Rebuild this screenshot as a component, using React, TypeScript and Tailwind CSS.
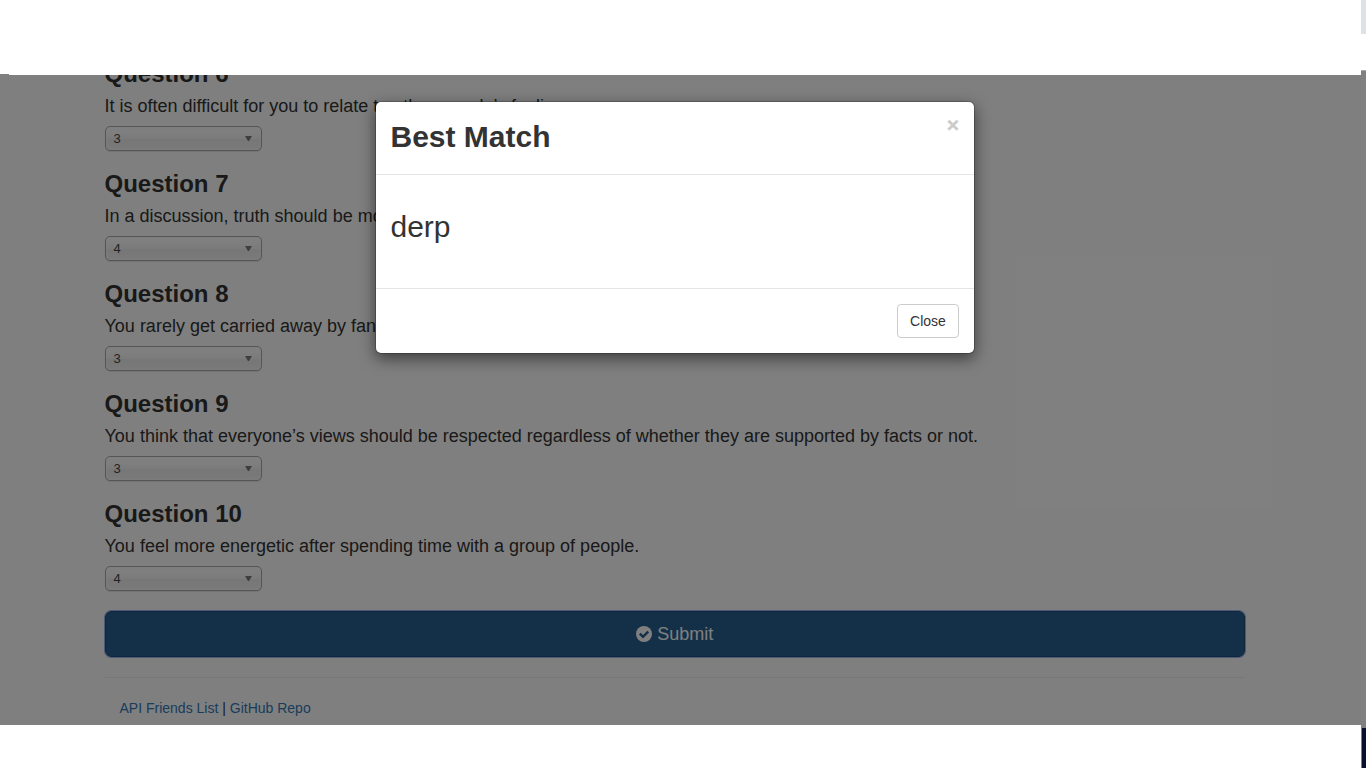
import React from "react";

type Question = { id: number; text: string; answer: number };

const questions: Question[] = [
  { id: 6, text: "It is often difficult for you to relate to other people’s feelings.", answer: 3 },
  { id: 7, text: "In a discussion, truth should be more important than people’s sensitivities.", answer: 4 },
  { id: 8, text: "You rarely get carried away by fantasies and ideas.", answer: 3 },
  { id: 9, text: "You think that everyone’s views should be respected regardless of whether they are supported by facts or not.", answer: 3 },
  { id: 10, text: "You feel more energetic after spending time with a group of people.", answer: 4 },
];

function ChosenSelect({ value }: { value: number }) {
  return (
    <div className="mt-2.5 flex h-[25px] w-[157px] items-center justify-between rounded-[5px] border border-[#aaa] bg-[linear-gradient(#fff_20%,#f6f6f6_50%,#eee_52%,#f4f4f4_100%)] pr-[9px] pl-2 text-[13px] leading-6 text-[#444] shadow-[0_0_3px_white_inset,0_1px_1px_rgba(0,0,0,0.1)]">
      <span>{value}</span>
      <svg width="7" height="5" viewBox="0 0 7 5" className="fill-[#7c7c7c]">
        <path d="M0 0h7L4 5H3z" />
      </svg>
    </div>
  );
}

function CheckBadge() {
  return (
    <svg width="16" height="16" viewBox="0 0 16 16">
      <circle cx="8" cy="8" r="8" fill="currentColor" />
      <path d="M3.8 7.6 7 10.8 12.2 5.6" fill="none" className="stroke-[#286090]" strokeWidth="2.5" />
    </svg>
  );
}

function QuestionBlock({ question }: { question: Question }) {
  return (
    <section className="h-[110px]">
      <h3 className="text-2xl leading-[26px] font-bold whitespace-nowrap">Question {question.id}</h3>
      <h4 className="mt-[9px] text-lg leading-5 whitespace-nowrap">{question.text}</h4>
      <ChosenSelect value={question.answer} />
    </section>
  );
}

function ResultModal() {
  return (
    <div className="absolute top-[26px] left-[375px] flex h-[253px] w-[600px] flex-col rounded-md border border-black/20 bg-white bg-clip-padding shadow-[0_5px_15px_rgba(0,0,0,0.5)]">
      <header className="flex h-[73px] items-start justify-between border-b border-[#e5e5e5] pt-[13px] pr-[15px] pl-[14.5px]">
        <h4 className="text-[30px] leading-[43px] font-bold">Best Match</h4>
        <button className="-mt-px text-[21px] leading-[21px] font-bold text-black opacity-20 [-webkit-text-stroke:0.5px_black]">×</button>
      </header>
      <div className="h-[113px] pt-[35px] pr-[15px] pl-[14.5px]">
        <h2 className="text-[30px] leading-[33px]">derp</h2>
      </div>
      <footer className="flex flex-1 items-start justify-end border-t border-[#e5e5e5] p-[15px]">
        <button className="h-[34px] w-[62px] rounded border border-[#ccc] bg-white text-sm text-[#333]">Close</button>
      </footer>
    </div>
  );
}

export default function App() {
  return (
    <div className="flex h-[768px] w-[1366px] overflow-hidden bg-white font-['Liberation_Sans',Arial,sans-serif] text-[#333]">
      <div className="flex w-[1361px] flex-col">
        <div className="flex h-[75px] items-end">
          <div className="h-px w-[9px] bg-[#808080]" />
        </div>
        <main className="relative h-[650px] overflow-hidden">
          <div className="-mt-[14px] ml-[104.5px] w-[1140.5px]">
            {questions.map((q) => (
              <QuestionBlock key={q.id} question={q} />
            ))}
            <button className="flex h-[46px] w-full items-center justify-center gap-[5px] rounded-md border border-[#204d74] bg-[#286090] text-lg text-white outline-1 outline-[#9ab4f5]">
              <CheckBadge />
              <span>Submit</span>
            </button>
            <hr className="mt-5 border-[#eee]" />
            <p className="mt-5 pl-[15px] text-sm leading-5 text-[#337ab7]">
              <a>API Friends List</a> <span className="text-[#333]">|</span> <a>GitHub Repo</a>
            </p>
          </div>
          <div className="absolute inset-0 bg-black/50" />
          <ResultModal />
        </main>
      </div>
      <div className="flex w-[5px] flex-col">
        <div className="h-[34px] bg-[#dee1e6]" />
        <div className="h-9" />
        <div className="h-px bg-[#a9a9a9]" />
        <div className="h-[657px] bg-[#808080]" />
        <div className="flex-1 border-l border-[#808080] bg-[#07112b]" />
      </div>
    </div>
  );
}
